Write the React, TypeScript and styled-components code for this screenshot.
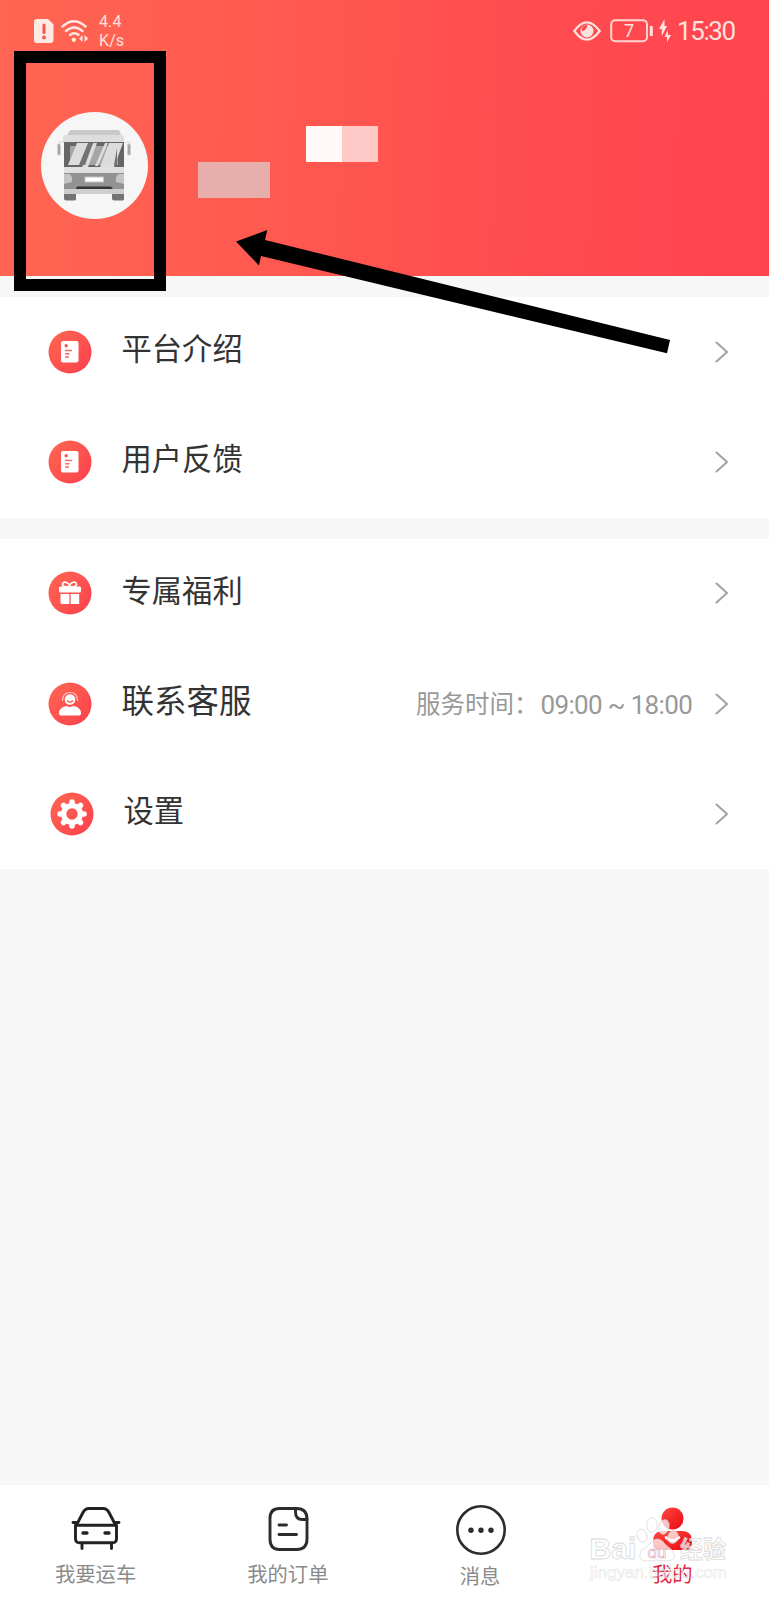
import React from 'react';
import styled, { createGlobalStyle } from 'styled-components';

const GlobalStyle = createGlobalStyle`
  * { box-sizing: border-box; }
  body {
    margin: 0;
    background: #f7f7f7;
    font-family: Roboto, "Noto Sans CJK SC", sans-serif;
  }
  svg { display: block; flex: none; }
`;

const Screen = styled.div`
  position: relative;
  display: flex;
  flex-direction: column;
  width: 769px;
  height: 1600px;
  overflow: hidden;
  background: #f7f7f7;
`;

const Header = styled.header`
  height: 276px;
  background: linear-gradient(92deg, #ff6552 0%, #ff5c51 30%, #ff4c4f 68%, #ff444f 100%);
`;

const StatusBar = styled.div`
  display: flex;
  align-items: center;
  justify-content: space-between;
  height: 62px;
  padding: 0 33px 0 34px;
  color: #ffe0dc;
`;

const StatusGroup = styled.div`
  display: flex;
  align-items: center;
`;

const Speed = styled.div`
  margin-left: 10px;
  font-size: 16px;
  line-height: 19px;
  letter-spacing: 0.1px;
`;

const Clock = styled.span`
  margin-left: 6px;
  font-size: 26px;
  line-height: 30px;
  width: 59px;
  white-space: nowrap;
  letter-spacing: -1.4px;
`;

const Profile = styled.div`
  display: flex;
  align-items: flex-start;
  padding: 50px 0 0 41px;
`;

const Avatar = styled.div`
  display: flex;
  justify-content: center;
  width: 107px;
  height: 107px;
  padding: 16px 0 0 1px;
  border-radius: 50%;
  background: #f6f6f6;
`;

const MaskedName = styled.div`
  display: grid;
  grid-template: repeat(2, 36px) / repeat(5, 36px);
  margin: 14px 0 0 50px;
`;

const MaskCell = styled.i<{ $row: number; $col: number; $color: string }>`
  grid-row: ${p => p.$row};
  grid-column: ${p => p.$col};
  background: ${p => p.$color};
`;

const Group = styled.section`
  margin-top: 21px;
  background: #fff;
`;

const Row = styled.div<{ $shift?: number }>`
  display: flex;
  align-items: center;
  height: 110.3px;
  padding: 0 40px 1px ${p => 48 + (p.$shift ?? 0)}px;
`;

const RowLabel = styled.span<{ $size?: number }>`
  flex: 1;
  margin-left: 29.5px;
  padding-bottom: 3px;
  font-size: ${p => p.$size ?? 30.3}px;
  line-height: 44px;
  color: #333;
`;

const RowNote = styled.span`
  display: flex;
  margin-right: 22px;
  padding-top: 2px;
  font-size: 24.5px;
  line-height: 36px;
  color: #999;
  white-space: pre;
`;

const Hours = styled.span`
  width: 154.500px;
  padding-left: 2px;
  font-size: 26px;
  letter-spacing: -0.65px;
`;

const TabBar = styled.nav`
  display: grid;
  grid-template-columns: repeat(4, 1fr);
  height: 115px;
  margin-top: auto;
  background: #fff;
`;

const Tab = styled.div<{ $active?: boolean; $drop?: number }>`
  display: flex;
  flex-direction: column;
  align-items: center;
  padding-top: ${p => 18 + (p.$drop ?? 0)}px;
  padding-right: 1px;
  font-size: 20.3px;
  line-height: 30px;
  color: ${p => (p.$active ? '#e0263c' : '#8a8a8a')};
  svg { margin-bottom: 5px; }
`;

const AvatarFrame = styled.div`
  position: absolute;
  left: 14px;
  top: 51px;
  width: 152px;
  height: 240px;
  border: 12px solid #000;
`;

const Arrow = styled.svg`
  position: absolute;
  left: 230px;
  top: 225px;
`;

const Watermark = styled.svg`
  position: absolute;
  left: 585px;
  top: 1500px;
`;

const Truck = () => (
  <svg width="76" height="76" viewBox="0 0 76 76">
    <path d="M13 2h49l3 7H9z" fill="#c9c9c9" />
    <rect x="6" y="7" width="61" height="9" rx="2" fill="#dedede" />
    <rect x="7" y="14" width="60" height="26" fill="#666" />
    <rect x="13" y="18" width="48" height="19" fill="#a5a5a5" />
    <path d="M20 15h12L23 37H11zM36 15h4L31 39h-6zM52 15h14L57 39H43zM48 15h3L41 38h-3z" fill="#dcdcdc" />
    <path d="M31 15h5l-8 22h-6zM60 20v17h-3z" fill="#737373" />
    <rect x="7" y="39" width="60" height="7" fill="#e0e0e0" />
    <rect x="7" y="45" width="60" height="18" fill="#929292" />
    <path d="M7 46h5q4 2 3 8l-8 2zM67 46h-5q-4 2-3 8l8 2z" fill="#c4c4c4" />
    <rect x="28" y="49" width="18.500" height="5" fill="#fff" stroke="#c3c3c3" strokeWidth="1" />
    <path d="M20 58.500h34l3 4H18z" fill="#353535" />
    <rect x="7" y="61" width="60" height="5" fill="#cecece" />
    <path d="M7 66h12v5q0 1.500-2 1.500H9q-2 0-2-2zM55 66h12v5q0 1.500-2 1.500h-8q-2 0-2-2z" fill="#747474" />
    <path d="M6 14H2v4M68 14h4v4" fill="none" stroke="#e2e2e2" strokeWidth="1.500" />
    <rect x=".5" y="16" width="3" height="11" rx="1" fill="#a4a4a4" stroke="#d0d0d0" />
    <rect x="70.500" y="16" width="3" height="11" rx="1" fill="#a4a4a4" stroke="#d0d0d0" />
  </svg>
);

const SimAlert = () => (
  <svg width="20" height="24" viewBox="0 0 20 24">
    <path d="M3 0h11l5.500 5.500V21a3 3 0 0 1-3 3H3a3 3 0 0 1-3-3V3a3 3 0 0 1 3-3z" fill="#ffe9e5" />
    <path d="M10 6v7.500" stroke="#f4594e" strokeWidth="3" strokeLinecap="round" />
    <circle cx="10" cy="18.500" r="1.900" fill="#f4594e" />
  </svg>
);

const WifiSvg = styled.svg`margin-left: 7px;`;
const BatterySvg = styled.svg`margin-left: 9px;`;
const BoltSvg = styled.svg`margin-left: 5px;`;

const Wifi = () => (
  <WifiSvg width="28" height="24" viewBox="0 0 28 24">
    <g fill="none" stroke="#ffe9e5" strokeWidth="2.400" strokeLinecap="round">
      <path d="M1.500 7.500Q13-3 24.500 7.500" />
      <path d="M5 12q8-7 16.500 0" />
      <path d="M9 16q4-3.500 8.500-.3" />
    </g>
    <circle cx="12.800" cy="20.700" r="2.200" fill="#fff1bb" />
    <path d="M21.500 16v7L18 19.500zM23.500 16v7l3.800-3.500z" fill="#ffe3df" />
  </WifiSvg>
);

const Eye = () => (
  <svg width="28" height="20" viewBox="0 0 28 20">
    <path d="M1.300 10Q13.700-7.200 26.700 10 13.700 27.200 1.300 10z" fill="none" stroke="#ffe3df" strokeWidth="2.200" />
    <circle cx="14" cy="10" r="6.500" fill="#ffe3df" />
    <path d="M9.500 6q1.500-2 4.500-2.300.8 4.800-4.800 6.500-1.500-2 .3-4.200z" fill="#fd4c50" />
  </svg>
);

const Battery = () => (
  <BatterySvg width="44" height="24" viewBox="0 0 44 24">
    <rect x="1.200" y="1.200" width="35.800" height="21" rx="4" fill="none" stroke="#ffd5d2" strokeWidth="2" />
    <path d="M41.300 7v10" stroke="#ffe3df" strokeWidth="3" />
    <text x="19" y="18" textAnchor="middle" fontSize="18" fill="#ffe3df" fontFamily="Roboto, sans-serif">7</text>
  </BatterySvg>
);

const Bolt = () => (
  <BoltSvg width="12" height="24" viewBox="0 0 12 24">
    <path d="M5.500 0v7H8L2.800 17v-7H0z" fill="#ffe3df" />
    <path d="M8.800 11v5H12l-4 7v-5H5.500z" fill="#ffe3df" />
  </BoltSvg>
);

const Chevron = () => (
  <svg width="14" height="22" viewBox="0 0 14 22">
    <path d="M1.500 1.500 12 11 1.500 20.500" fill="none" stroke="#a3a3a3" strokeWidth="2.100" strokeLinecap="round" strokeLinejoin="round" />
  </svg>
);

const Badge = ({ children }: { children: React.ReactNode }) => (
  <svg width="44" height="44" viewBox="0 0 44 44">
    <defs>
      <linearGradient id="badge" x1="0" y1="0" x2="1" y2="1">
        <stop offset="0" stopColor="#ff6753" />
        <stop offset="1" stopColor="#fb404c" />
      </linearGradient>
    </defs>
    <circle cx="22" cy="22" r="21.500" fill="url(#badge)" />
    {children}
  </svg>
);

const DocGlyph = () => (
  <>
    <rect x="13" y="11" width="17.500" height="21.500" rx="2" fill="#fff" />
    <circle cx="18.200" cy="15.800" r="1.700" fill="#fb5650" />
    <path d="M17 20.500h7M17 23.700h4.500M17 27h4" stroke="#fb6a63" strokeWidth="1.400" />
  </>
);

const GiftGlyph = () => (
  <>
    <path d="M21.500 16q-7 0-7-2.500c0-3.500 6-3 7 1.500 1-4.500 7-5 7-1.500q0 2.500-7 2.500z" fill="none" stroke="#fff" strokeWidth="1.700" />
    <rect x="11" y="15.500" width="22" height="6" rx="1.500" fill="#fff" />
    <path d="M12.500 23h18.700v10h-17q-1.700 0-1.700-1.500z" fill="#fff" />
    <path d="M22 23v10" stroke="#fb5952" strokeWidth="1.300" />
  </>
);

const ServiceGlyph = () => (
  <>
    <circle cx="22" cy="17.500" r="5.300" fill="#fff" />
    <path d="M14.500 19q0-8.500 7.500-8.500t7.500 8.500" fill="none" stroke="#ffc4bf" strokeWidth="1.200" />
    <path d="M19 18.500q3 3.300 6 0" fill="none" stroke="#fb5a52" strokeWidth="1.200" />
    <path d="M11 31.500q0-6.500 8-7.500 3 2 6 0 8 1 8 7.500 0 2-2 2H13q-2 0-2-2z" fill="#fff" />
  </>
);

const GearGlyph = () => (
  <>
    {[0, 45, 90, 135].map(a => (
      <path key={a} d="M22 10v24" stroke="#fff" strokeWidth="5.500" strokeLinecap="round" transform={`rotate(${a} 22 22)`} />
    ))}
    <circle cx="22" cy="22" r="11" fill="#fff" />
    <circle cx="22" cy="22" r="5.700" fill="#fc554f" />
  </>
);

const CarIcon = () => (
  <svg width="52" height="52" viewBox="0 0 52 52" fill="none" stroke="#222" strokeWidth="2.900" strokeLinecap="round" strokeLinejoin="round">
    <path d="M7 21 13 9.500Q15 5.500 19 5.500h14q4 0 6 4L45 21M3 19.500h3M46 19.500h3" />
    <path d="M5.500 22.300h41v13.500q0 4-4 4h-33q-4 0-4-4zM12 41v4.500M41.500 41v4.500" />
    <path d="M13 30h4M35 30h4" strokeWidth="3.300" />
  </svg>
);

const OrderIcon = () => (
  <svg width="52" height="52" viewBox="0 0 52 52" fill="none" stroke="#2c2c2c" strokeWidth="2.900" strokeLinecap="round" strokeLinejoin="round">
    <path d="M17.500 5.500h17q10.500 0 10.500 10.500v20q0 10.500-10.500 10.500h-17Q8 46.500 8 36V15.500q0-10 9.500-10z" />
    <path d="M33.500 6v3q0 7.500 7 7.500H45M17 22h7.500M17 31.500h17.500" />
  </svg>
);

const MessageIcon = () => (
  <svg width="52" height="52" viewBox="0 0 52 52" fill="#2c2c2c">
    <circle cx="27" cy="25" r="23.700" fill="none" stroke="#2c2c2c" strokeWidth="2.600" />
    {[17, 27, 37].map(x => <circle key={x} cx={x} cy="25.200" r="2.700" />)}
  </svg>
);

const MineIcon = () => (
  <svg width="52" height="52" viewBox="0 0 52 52">
    <defs>
      <linearGradient id="mine" x1="0" y1="0" x2="1" y2="1">
        <stop offset="0" stopColor="#ff4a40" />
        <stop offset="1" stopColor="#e90712" />
      </linearGradient>
    </defs>
    <circle cx="26.500" cy="15.500" r="11" fill="url(#mine)" />
    <path d="M17 28h19q10 0 10 11 0 8-5 8H12q-5 0-5-8 0-11 10-11z" fill="url(#mine)" />
    <path d="M20 34.500q6.500 6.500 13 0" fill="none" stroke="#fff" strokeWidth="2.600" strokeLinecap="round" />
  </svg>
);

const BrandMark = () => (
  <Watermark width="150" height="90" viewBox="0 0 150 90">
    <g fill="#fff" fillOpacity=".72" stroke="#cfcfcf" strokeOpacity=".8" strokeWidth=".8">
      <ellipse cx="57" cy="35.500" rx="5" ry="6.500" transform="rotate(-18 57 35.500)" />
      <ellipse cx="67" cy="25" rx="5.200" ry="7.500" />
      <ellipse cx="79" cy="27" rx="5" ry="7.500" transform="rotate(15 79 27)" />
      <ellipse cx="88" cy="37" rx="5.300" ry="6.500" transform="rotate(15 88 37)" />
      <path d="M72 39q5 0 8 5l7 6q6 10-4 11-6 0-11-1-6 1-11 1-10-1-4-11l8-6q3-5 7-5z" />
      <g fontFamily='"Liberation Sans", "Noto Sans CJK SC", sans-serif' fontWeight="700">
        <text x="4.500" y="59" fontSize="29" textLength="47" lengthAdjust="spacingAndGlyphs">Bai</text>
        <text x="95" y="58" fontSize="24" textLength="46" lengthAdjust="spacingAndGlyphs">经验</text>
      </g>
    </g>
    <text x="72" y="58" textAnchor="middle" fontSize="17" fontFamily='"Liberation Sans", sans-serif' fill="#fff" stroke="#e0a9a9" strokeWidth=".6">du</text>
    <text x="5" y="78" fontSize="17" textLength="137" lengthAdjust="spacingAndGlyphs" fontFamily='"Liberation Sans", sans-serif' fill="#fff" fillOpacity=".6" stroke="#d8d8d8" strokeOpacity=".6" strokeWidth=".65">jingyan.baidu.com</text>
  </Watermark>
);

export default function App() {
  return (
    <Screen>
      <GlobalStyle />
      <Header>
        <StatusBar>
          <StatusGroup>
            <SimAlert />
            <Wifi />
            <Speed>4.4<br />K/s</Speed>
          </StatusGroup>
          <StatusGroup>
            <Eye />
            <Battery />
            <Bolt />
            <Clock>15:30</Clock>
          </StatusGroup>
        </StatusBar>
        <Profile>
          <Avatar><Truck /></Avatar>
          <MaskedName>
            <MaskCell $row={1} $col={4} $color="#fffaf8" />
            <MaskCell $row={1} $col={5} $color="#ffc9c8" />
            <MaskCell $row={2} $col={1} $color="#e8aeab" />
            <MaskCell $row={2} $col={2} $color="#e8aeab" />
          </MaskedName>
        </Profile>
      </Header>

      <Group>
        <Row>
          <Badge><DocGlyph /></Badge>
          <RowLabel>平台介绍</RowLabel>
          <Chevron />
        </Row>
        <Row>
          <Badge><DocGlyph /></Badge>
          <RowLabel>用户反馈</RowLabel>
          <Chevron />
        </Row>
      </Group>

      <Group>
        <Row>
          <Badge><GiftGlyph /></Badge>
          <RowLabel>专属福利</RowLabel>
          <Chevron />
        </Row>
        <Row>
          <Badge><ServiceGlyph /></Badge>
          <RowLabel $size={32.5}>联系客服</RowLabel>
          <RowNote>服务时间：<Hours>09:00 ~ 18:00</Hours></RowNote>
          <Chevron />
        </Row>
        <Row $shift={2}>
          <Badge><GearGlyph /></Badge>
          <RowLabel>设置</RowLabel>
          <Chevron />
        </Row>
      </Group>

      <TabBar>
        <Tab><CarIcon />我要运车</Tab>
        <Tab><OrderIcon />我的订单</Tab>
        <Tab $drop={2}><MessageIcon />消息</Tab>
        <Tab $active><MineIcon />我的</Tab>
      </TabBar>

      <AvatarFrame />
      <Arrow width="445" height="135" viewBox="230 225 445 135">
        <path d="M236 241.500 267.300 230 265 240 670 340 667 353.300 261 256 259 265.500z" />
      </Arrow>
      <BrandMark />
    </Screen>
  );
}
